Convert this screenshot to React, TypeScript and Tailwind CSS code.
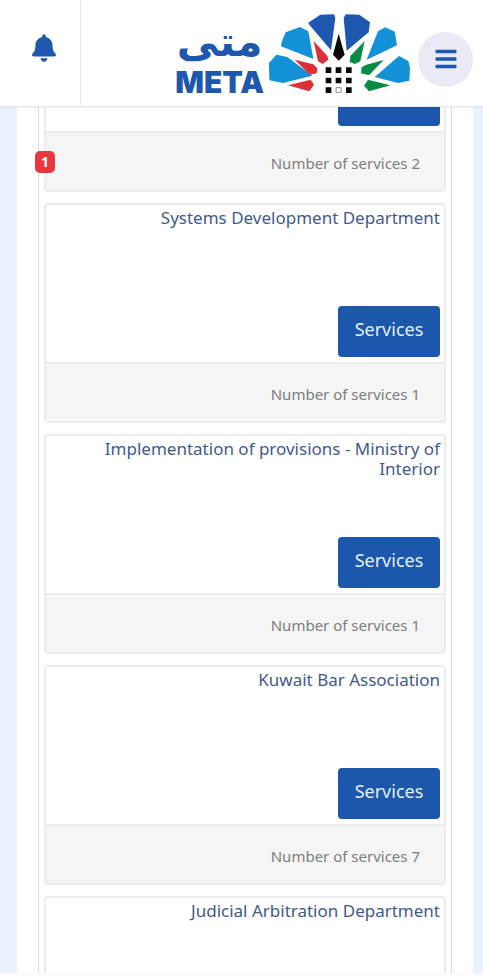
import { FaBars, FaBell } from 'react-icons/fa';

type Department = {
  id: number;
  name?: string;
  services: number;
};

const departments: Department[] = [
  { id: 1, services: 2 },
  { id: 2, name: 'Systems Development Department', services: 1 },
  { id: 3, name: 'Implementation of provisions - Ministry of Interior', services: 1 },
  { id: 4, name: 'Kuwait Bar Association', services: 7 },
  { id: 5, name: 'Judicial Arbitration Department', services: 1 },
];

function LogoMark() {
  return (
    <svg viewBox="0 0 426 240" className="h-20 w-[142px]" aria-hidden>
      <g fill="#1d57ae">
        <path d="M121 29 157 5 198 4 202 15 189 112 124 35Z" />
        <path d="M227 15 233 4 274 5 306 28 302 58 236 113Z" />
      </g>
      <g fill="#1290d8">
        <path d="M41 87 53 58 96 42 121 55 136 138 39 100Z" />
        <path d="M296 140 330 55 352 43 380 56 387 97Z" />
        <path d="M3 150 25 125 58 132 133 188 45 210 4 202Z" />
        <path d="M320 192 393 129 421 144 426 165 424 203 390 210Z" />
      </g>
      <g fill="#dc3038">
        <path d="M137 84 178 129 181 140 164 153 150 145Z" />
        <path d="M80 140 136 154 148 166 146 181 125 185Z" />
        <path d="M60 217 128 200 138 215 124 235Z" />
      </g>
      <g fill="#0b8b46">
        <path d="M290 84 277 145 261 153 245 147 247 129Z" />
        <path d="M347 141 303 187 279 181 281 163 295 155Z" />
        <path d="M300 200 367 217 303 235 288 218Z" />
      </g>
      <g fill="#080808">
        <path d="M212 62 230 125 212 143 195 125Z" />
        <path d="M173 163h17v17h-17zM203 163h17v17h-17zM234 163h17v17h-17z" />
        <path d="M173 194h17v17h-17zM203 194h17v17h-17zM234 194h17v17h-17z" />
        <path d="M173 223h17v17h-17zM234 223h17v17h-17z" />
      </g>
      <path d="M204 224h15v15h-15z" fill="#fff" stroke="#555" strokeWidth="2" />
    </svg>
  );
}

function Logo() {
  return (
    <a href="#home" aria-label="META" className="flex items-center gap-1">
      <span className="mt-2.5 flex flex-col items-center text-[#1d57ae]">
        <span
          lang="ar"
          dir="rtl"
          className="font-['DejaVu_Sans',sans-serif] text-[42px] leading-12 font-bold"
        >
          متى
        </span>
        <span className="font-[Inter,sans-serif] text-3xl leading-8 font-black">META</span>
      </span>
      <LogoMark />
    </a>
  );
}

function Header() {
  return (
    <header className="relative z-10 flex h-[107px] shrink-0 border-b border-gray-200 bg-white shadow-xs">
      <div className="flex w-[81px] items-center justify-end border-r border-gray-200 pr-6 pb-2.5">
        <button type="button" aria-label="Notifications" className="text-[#1d57ae]">
          <FaBell className="h-7 w-6" />
        </button>
      </div>
      <div className="flex flex-1 items-center justify-end gap-2 pr-2.5">
        <Logo />
        <button
          type="button"
          aria-label="Open menu"
          className="mt-3 flex size-[55px] items-center justify-center rounded-full bg-[#e9eaf6] text-[#1d57ae]"
        >
          <FaBars className="size-6" />
        </button>
      </div>
    </header>
  );
}

function DepartmentCard({ department }: { department: Department }) {
  return (
    <article className="flex h-[220px] shrink-0 flex-col rounded-sm border-2 border-[#ebebeb] bg-white text-right">
      <div className="flex flex-1 flex-col items-end px-1 pt-[3px] pb-[5px]">
        {department.name ? (
          <h2 className="text-[17px] leading-5 text-[#3f5a8f]">{department.name}</h2>
        ) : null}
        <button
          type="button"
          className="mt-auto h-[51px] w-[102px] rounded-sm bg-[#1b57ab] pb-1.5 text-lg text-[#e3f1ff]"
        >
          Services
        </button>
      </div>
      <p className="h-[59px] border-t-2 border-[#ebebeb] bg-[#f5f5f5] pt-5 pr-6 text-[15px] leading-5 text-[#7d7d7d]">
        Number of services {department.services}
      </p>
    </article>
  );
}

export default function App() {
  return (
    <div className="flex h-dvh flex-col overflow-hidden border-b-2 border-[#fafafa] bg-[#e9f1fe] font-['Noto_Sans',sans-serif]">
      <Header />
      <main className="relative mr-2.5 ml-[17px] min-h-0 flex-1 bg-white px-[21px]">
        <div className="h-full overflow-hidden border-x border-[#dcdcdc] px-[5px]">
          {/* list is scrolled part way through the first card */}
          <div className="-mt-[135px] flex flex-col gap-[11px]">
            {departments.map((department) => (
              <DepartmentCard key={department.id} department={department} />
            ))}
          </div>
        </div>
        <span className="absolute top-11 left-[18px] flex h-[22px] w-5 items-center justify-center rounded-[5px] bg-[#e8373f] text-sm font-bold text-white">
          1
        </span>
      </main>
    </div>
  );
}
